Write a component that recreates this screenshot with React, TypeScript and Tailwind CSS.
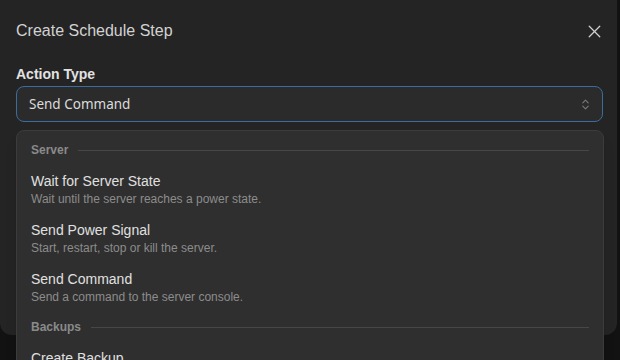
import { X, ChevronsUpDown } from 'lucide-react';

const groups = [
  {
    label: 'Server',
    items: [
      { title: 'Wait for Server State', desc: 'Wait until the server reaches a power state.' },
      { title: 'Send Power Signal', desc: 'Start, restart, stop or kill the server.' },
      { title: 'Send Command', desc: 'Send a command to the server console.' },
    ],
  },
  {
    label: 'Backups',
    items: [{ title: 'Create Backup', desc: 'Create a new backup of the server files.' }],
  },
];

export default function App() {
  return (
    <div className="w-[620px] h-[360px] bg-[#121212] overflow-hidden relative" style={{ fontFamily: '"Liberation Sans", Arial, sans-serif' }}>
      {/* MODAL */}
      <div className="w-[617px] h-[335px] bg-[#242424] rounded-b-xl px-4 pt-[22px]">
        <div className="flex items-center justify-between h-[18px]">
          <h2 className="text-base text-[#d2d2d2]">Create Schedule Step</h2>
          <button className="text-[#cfcfcf] mr-[-4px]"><X size={21} strokeWidth={1.5} /></button>
        </div>

        <div className="mt-[24px] text-sm font-bold text-[#e2e2e2] leading-5">Action Type</div>
        <div className="mt-[2px] w-[587px] h-[36px] rounded-lg border border-[#3b6c9f] bg-[#2b2b2b] flex items-center justify-between pl-[12px] pr-[10px]">
          <span className="text-[13.5px] text-[#dcdcdc]" style={{ fontFamily: '"Noto Sans", sans-serif' }}>Send Command</span>
          <ChevronsUpDown size={13} className="text-[#7a7a7a]" />
        </div>
      </div>

      {/* DROPDOWN */}
      <div className="absolute left-[16px] top-[130px] w-[588px] h-[260px] rounded-lg border border-[#3c3c3c] bg-[#2f2f2f] p-1 shadow-lg">
        {groups.map(g => (
          <div key={g.label}>
            <div className="flex items-center gap-[10px] px-[10px] pt-[6px] pb-[6px]">
              <span className="text-xs font-bold text-[#8a8a8a] leading-[18px]">{g.label}</span>
              <div className="flex-1 h-px bg-[#474747]" />
            </div>
            {g.items.map(i => (
              <div key={i.title} className="px-[10px] pt-[6px] pb-[7px]">
                <div className="text-sm leading-5 text-[#e0e0e0]">{i.title}</div>
                <div className="text-xs leading-4 text-[#8c8c8c]">{i.desc}</div>
              </div>
            ))}
          </div>
        ))}
      </div>
    </div>
  );
}
